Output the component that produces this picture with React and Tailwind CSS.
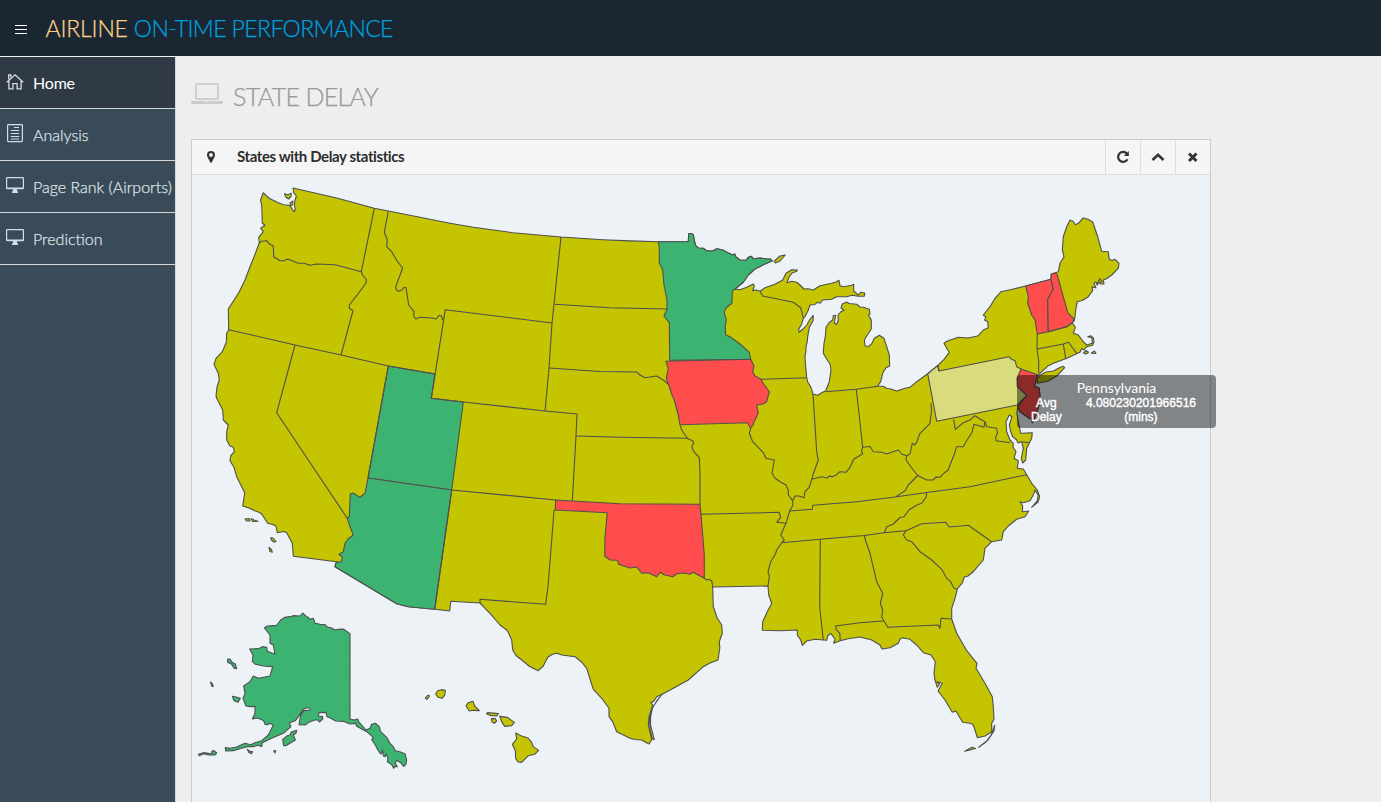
import React from "react";

const YELLOW = "#c4c400";
const GREEN = "#3cb371";
const RED = "#ff4d4d";

const MAINLAND = `M263.3,192.7 266,195.5 270,198.7 277.3,202.3 283.3,204.7 289,205.3 291,206.7 292.5,210 294.3,211.7 295.3,209.3 294.3,205 295,200.7 296.3,196 293.7,192.7 293,188
336.7,198 374.3,208.3 388.3,211 420,217.3 450,223.2 473.3,227.3 513,232.7 561,237 603,239.7 630,240.9 658.3,241.7 688.3,241.7 688.7,233.5 691,233.5 693.3,234.7 694.4,241 695.7,245.7 698.3,248 703.3,248.3 706,250.3 709,251 712.7,251 716.7,248.7 722.7,250 728.3,253 732.7,255 734.7,254 736,257 740,260 746,260.3 748.3,257.3 751.3,256.3 753.3,258.7 760,258 766.7,259 770,259 772.3,260.7
763.3,264.7 755,269 748.3,275 743.3,282.3 735,289 740,289.7 746.7,287.3 753.3,284 754.3,286.3 752.7,290.7 756,290 760,291.3 765,287.7 775,284.3 782.7,280 786,273.3 791.7,269.7 797.3,270 796.7,271.3 791.7,273.3 789,277.3 787,282.7 791.7,281.3 796.7,282.3 800,285 804,289 808,288.7 813.3,290 820,285.7 831.7,283.3 836,282 839,280.3 840,285.7 844.3,286.7 851.7,285.3 853.7,284.3 853.7,291 858.3,295 860.7,292.3 864.7,293 864.3,296.3 858.3,296.3 852,295.3 846.7,296.7 836.7,296.7 831.7,299.3 822.7,300 820,303.3 817,302.3 815,304.5 810,305 808.3,310 805,316.7 803.3,318.3 801.7,324 798.7,329.3 799,332.3 802.7,329.3 806.7,325 810,319.3 813.3,315.3 813,320.7 809.3,327.3 807.7,336.7 807.3,341.7 806,346.7 806,351 805,356.7 805.7,366.7 806.7,377.7 807.7,382 810.7,386.7 813,394 817.7,395.3 821.7,392.7 825.7,390.7 829.3,381.7 831,370 830,364 827.3,360 823.3,353.3 824,343.3 825.3,336.7 826,327.3 829,322.7 832.7,320 833.3,315.7 835.7,315.3 834.3,323.3 836.7,324.3 838.3,320 838,315 841,311.7 844,310.3 841,308 842.3,304 846.7,302 849,303.5 856.7,304.3 860,307 863.3,307.3 869.3,309.3 870,314 868.5,315 871.3,320 871.3,329 867.3,335 864.3,340 865,345.7 868.3,346.7 872,343.3 874.3,338.3 879.3,335.3 884,338.3 886.7,346.7 889.3,355 889.7,366 886,367.7 882.7,373.3 880.7,381.7 877.3,386.3 883.3,386.3 887,388.5 890,388.7 896.7,391 905,388.3 910,387.3 916.7,381.7 927.7,373.7
936.7,366.7 944,359.3 949.3,352.3 946.7,348.3 944,343.3 946.7,341.3 958.3,337.3 968.3,338 978.3,335.7 983.3,330 988.3,327.7 987.7,321.7 984.5,320 986,317.3 983.3,315 990,306.7 995,298.3 1001,291.7 1013.3,289 1025.7,286 1051,279.3 1051.3,274 1055.7,272.7 1058.3,271.7 1060,263.3 1064,256.7 1062.3,250 1063.3,236.7 1066.7,226.7 1070,220 1073,221.3 1075.3,224.7 1078.3,223.3 1083.3,218 1088,219.3 1092.7,222 1097.7,236.7 1101.7,251.3 1108.3,251.7 1109.3,259.3 1112,260.5 1115,259.3 1119,263.3 1118.3,268.3 1111.7,275 1106,279 1103.3,280 1104,284 1100,284 1099.3,280 1097.3,285.3 1096,282 1094,283.3 1096,288 1092,286.7 1092.7,290.7 1088.3,296.7 1083.3,300 1077.3,301.7 1076,308.3 1075,316.7 1074.3,320.7 1072.3,322.7 1075.3,327.3 1073.3,333.3 1078.3,335 1083.3,341.7 1086.7,345 1092.3,343.3 1092,337.7 1087.7,336.7 1090.7,335.7 1093.3,338 1094,341.7 1092.7,345.3 1086.7,346.7 1084,350 1081.7,348.5 1080,352.3 1076,354 1065.7,358.7 1053.3,363.3 1048.3,365.7 1040,373.3 1037.3,376.7
1034.3,386 1039.3,388.3 1040,396.7 1038.7,406 1036.7,413.3 1032.3,422.7 1031,418.5 1029.3,418.3 1020,411.7 1018,406.7 1016.7,413.3 1020.7,433.3 1032.3,432.7 1031.7,438.3 1026.7,448.3 1025.7,460 1022.7,463 1021.3,458.3 1023.3,448.3 1021.7,441.7 1018,443 1016.7,440 1012.7,436.7 1010.7,431.7 1009.3,425 1012,416.7 1009.3,415 1006,421.7 1006.7,431.7 1010,440 1013.3,443.3 1013,447 1016,451.7 1014,458.3 1018.3,460.7 1017.3,468.3 1023.3,469 1026.7,474.7 1031.7,483.3 1037.3,490 1039.7,496.7 1038,502 1031.7,507.3 1037.5,500.5 1038,495 1035,490 1033.3,495 1030,500.7 1023.3,502.7 1020,501.7 1022.7,506 1022.3,511.7 1028.7,511 1025,516.7 1016.7,519.3 1008.3,526 1003.3,531.7 1001.7,540 991.7,541.7 985,548.3 983.3,560 973.3,571.7 968,576 964,577.3 962.7,582.3 957.3,589 955,598.3 951.7,608.3 951.7,619
956.7,633.3 966.7,650.7 977,663.3 976,668.3 985,683.3 992.3,696.7 993.3,706.7 994,719.3 991.7,723.3 991.7,731.7 985,736 977.3,737.7 975,730 973,724.5 970,723.3 962.7,722.3 959.3,716.7 956,711 952.3,712.3 945,700 938,691 942.3,683.3 936.7,681.7 939.5,684 937.3,687.3 935,680 934,673.3 935.3,661.7 931,655 923.3,652.7 916.7,645 910,639.3 903,637.8 900,639 898.3,643.3 890,647.7 882,649 880,645 871.7,640 860,637 848.3,638.7 840,640.7 833.7,643.3 835,639.5 833.3,636.7 830.7,633.3 827.7,636 826.7,640.3 815,639.3 806.7,641 802.3,645.3 800.7,640 797.3,635 797.3,630 780,630.7 762.3,630.3 762.7,621.7 767.3,611.7 771.7,603.3 768.7,595 768,586 712.7,587
713.3,606.7 717.3,618.3 721.7,625 722.3,633.3 719.3,641.7 719.8,648 718,660 710,663 703.3,666.7 688.3,680 673.3,688.3 661.7,694.5 656.7,696.7 654,701 650.7,702.7 652.7,705 649,716.7 648.3,725 651.7,740 649,744 646,742.5 641.7,740 635,739.5 630,738.3 616.7,731.7 612.7,721.7 609,716.7 609,708.3 601.7,698.3 593.3,689.3 590,679 586.7,668.3 582,662.5 575,656.7 562,655 556.7,653.3 552,654.5 547.7,657.3 543.3,666 538.3,670.7 530,666.7 521.7,660 516,655.5 512.7,650 511.7,640 508.5,633 506.7,630 500,625 490,613.3 485,608.3 480,603 450.7,601.3 449.7,611 434.7,609.3 408.3,606.7 396.7,603.7 335,566.7 335.7,563.3 338.3,562
293.3,556.3 292.3,543.3 286.7,532.7 284,531.5 277.3,532.7 276,526 272,524.3 267.7,523.3 262,514.5 260,512.7 254,510.5 249,508 242.7,506 244.7,492.7 236.7,476.7 234,467.3 230,460.7 230.7,455.7 234.3,451.7 233.3,447.3 230,446 226.7,440 226.7,431.7 228.3,425 223.3,420 222.7,410 216.7,398.3 216,396 217,387 219.3,380 218.3,373.3 214,364.3 216,358.3 222.3,351.7 226.3,342.3 226.7,333.3 228.7,329.7 228.3,309 239.3,291.7 245,280 250,266.7 254,257 259.3,242.7 258.7,237.3 263.3,231.7 260.7,228.3 265,225.3 262.3,223.3 261.7,205 260.5,200Z`;

const TINTED = [
  ["Utah", GREEN, "388.3,366 435,374 431.3,398.3 463.3,402 451.7,490 368,478"],
  ["Arizona", GREEN, "368,478 451.7,490 434.7,609.3 408.3,606.7 396.7,603.7 335,566.7 335.7,563.3 338.3,562 341.5,561.7 342.3,557 339,554.3 343.3,551.7 345,543.3 348,539 353.3,535 350,526.7 347.3,518.3 349.3,516.7 350.3,494 353.3,493 356,495 360,497.3 365,493.3"],
  ["Minnesota", GREEN, "658.3,241.7 688.3,241.7 688.7,233.5 691,233.5 693.3,234.7 694.4,241 695.7,245.7 698.3,248 703.3,248.3 706,250.3 709,251 712.7,251 716.7,248.7 722.7,250 728.3,253 732.7,255 734.7,254 736,257 740,260 746,260.3 748.3,257.3 751.3,256.3 753.3,258.7 760,258 766.7,259 770,259 772.3,260.7 763.3,264.7 755,269 748.3,275 743.3,282.3 735,289 732.3,291 732,303.3 727,307 724,311.7 726.3,320 725.2,327 725.7,335 730,336.7 740,344 749.3,352.3 750.7,359.3 669.7,360.3 669.3,322.7 664,316 667,309.3 667,300 664,285 662.7,270 659.3,262.7 659.3,247"],
  ["Iowa", RED, "666,361.3 750.7,359.3 754,366 752.7,371.7 755,376 761,379.3 763,383 769.3,391.7 766.7,401.7 763,404 756.7,405 758.3,413.3 754,421.7 753,425 750.7,428 747.3,422.7 680,424.7 678.3,415 674.3,400 672,395 668.7,384.7 666.3,378.3 668.3,368.3"],
  ["Oklahoma", RED, "555.7,500 572.3,501 620,503.7 700,504.3 701,514.3 702.7,535 704.3,555 704.3,578.3 693.3,572.3 690,574.3 684,573 676.7,573.7 672.7,576.7 664,574.8 660,572.3 656.7,576.7 648.3,572.7 642,573.3 636.7,567 630,568 618.7,564.3 617.7,560.3 610,560 604.7,556 605,536.7 607.3,512.7 555.3,510"],
  ["Vermont", RED, "1025.7,286 1051,279.3 1053.3,289.3 1047.7,299.3 1048.3,331.7 1037.3,334 1035,320 1031.7,315 1027.7,303.3 1028.3,296.7"],
  ["New Hampshire", RED, "1051,279.3 1051.3,274 1055.7,272.7 1057.3,275 1067.7,312.7 1074.3,319.3 1072.3,322.7 1066.7,326.7 1048.3,331.7 1047.7,299.3 1053.3,289.3"],
  ["New Jersey", RED, "1021,369 1037.5,374.7 1037,378.5 1034.3,386 1039.3,388.3 1040,396.7 1038.7,406 1036.7,413.3 1032.3,422.7 1031,418.5 1029.3,418.3 1020,411.7 1018,406.7 1026.7,395.3 1017.3,386.7 1017,378.3"],
  ["Pennsylvania", "#dadb7c", "927.7,373.7 937.7,365.5 939,371 1009,356.7 1011,359 1015,360.7 1016.7,366.7 1021,369 1017,378.3 1017.3,386.7 1026.7,395.3 1017.3,405 936.7,421.3"],
];

const BORDERS = [
  "259.3,242.7 261.7,241.3 266.7,240.7 269,243.7 273.3,246 273.7,256.7 280,260.7 284,260.7 287.7,259 298.3,263.3 304,263.3 310,265.3 316.7,264 335,264.7 361.3,271.7 374.3,208.3",
  "361.3,271.7 362.5,275 366.3,279.3 366,283 356.7,295.7 349.3,305 349.3,308.3 353,310.7 341,355",
  "228.7,329.7 295,345 341,355 388.3,366 435,374",
  "388.3,211 384.3,232.3 387.3,240 386.7,246.7 391.7,251.7 397,261 402.7,268 395.7,286.7 396.5,290 398.7,291.3 402,290 404,287.3 406,287.7 408.7,305 414,311.7 413.7,316 415.7,319 420,317.3 432,318 436,319 439.3,315.3 441.5,316 442.7,320",
  "552,323 445.3,309.7 431.3,398.3 463.3,402 545,411 577,414 576,436 572.3,501",
  "561,237 552,323 549,368 545,411",
  "554.7,304.3 610,307.7 667.3,309",
  "549,368 600,371.5 636.7,372 640,375 645,377.7 656.7,376 663.3,380 668.7,384.7",
  "576,436 620,437.3 688,438.3",
  "680,424.7 681.7,430 687.3,438.3 693.3,441.3 693.3,444 691.7,446.7 694,452 699.3,457.3 700,475 700,504.3",
  "451.7,490 555.7,500",
  "388.3,366 368,478", "295,345 276.7,412.7 347.3,518.3",
  "451.7,490 434.7,609.3",
  "555.3,510 554,510.7 548.3,583.3 545.7,604.3 480,599.3 480,603",
  "704.3,578.3 706.7,580 709,579.3 711.7,580.7 712.7,587",
  "701,514.3 779,512.3 780.7,517.3 776.7,522.3 786,523.3",
  "760,291.3 762.7,296 793.3,302.3 800.7,307.7 803.3,318.3",
  "761,379.3 806.7,377.7",
  "750.7,428 749.3,433.3 752.7,441.7 763.3,452.7 766,458.3 774.3,460 772,473.3 775,478 780,481.7 786,485 788.3,490 788.3,495 792.7,500.7 795,496 799,496 804,497.7 805,491.7 809.3,487.3 811.7,479.3",
  "813,394 816.7,451.7 818.3,460 815,469 811.7,479.3 821.7,476.7 827.3,478 830,475.8 832,477 835.7,475.3 840,471.7 846,472.3 850,467.3 853.7,459.3 862.7,453.7 861.5,451 862.7,447.3 856.3,389.3",
  "825.7,391.8 856.3,389.3 877.3,386.3",
  "862.7,447.3 870,446.5 873.3,451.7 881.7,452.3 886.7,454 898.3,450 901.7,454 906.7,455.7 910,454 912.3,443.3 915,445 917.3,440.7 920,433.3 930,423.3 931.5,410 931,403.3",
  "906.7,455.7 906,460 913.3,470 917.7,475.5 908.3,485 905,490.7 896,496.7",
  "789.7,511 812.3,509.3 812.7,505.3 856.7,501.7 893.3,497.3 926.7,492.5 970,486.7 1026.7,474.7",
  "792.7,500.7 793,505 789.7,511 786,523.3 783,530 780.7,535 784.3,540 781.7,542.7 776.7,550 775.5,554 770.7,561.7 768,571.7 769.3,576 768,586",
  "781.7,542.7 820,539.3 864.3,535.5 884.3,532.7 906,530.7",
  "926.7,492.5 926,497.3 921.7,503.3 917,505 913.3,507.3 909,510 904,516.7 900,517.5 893.3,524 886.7,526.7 884.3,532.7",
  "906,530.7 921.7,523.7 945.7,522.3 949.3,527 968.3,525.3 991.7,541.7",
  "906,530.7 903.3,535 906.7,540 911.7,541.7 920,551.7 931.7,560 941.7,569.3 946.7,578.3 950.7,581.7 954,588.3 957.3,589",
  "864.3,535.5 866,542 870,553.3 876.7,581.7 882.7,593.3 880.3,603.3 882.7,610 881.7,617 887.7,627.3 938,625 940,628.3 941,618.3 951.7,619",
  "883.3,621 860,622.8 835.7,626 836,629.3 839.7,633.3 840.3,640.7",
  "820.3,539.3 819.7,607.3 823.3,640.3",
  "937.7,365.5 939,371",
  "1037.3,334 1037,349 1038.7,361 1038.7,373.3",
  "1048.3,331.7 1066.7,326.7 1072.3,322.7",
  "1037,349 1063.3,344 1068.7,342.3 1072,347 1076.7,353.3", "1063.3,344 1065.7,358.7",
  "953.7,419.3 955.3,429.3 963.3,422.7 970,420 975,415.7 980,419 985,421.7 986.7,426.7 996.7,428.3 997.5,433 995.7,437 996,440.7 1010,442.7",
  "985,421.7 984,427.3 974,424.3 971.7,433.3 967,440 963.3,446.7 956.7,446.7 954,455 950,465 948.3,470 944,473 940,477.3 936,477 933,480 926.7,480 917.7,475.5",
  "1021.7,441.7 1029.3,442.7",
];

const ISLANDS = [
  "1040.7,375 1046,372 1053.3,371 1060,367.5 1063.3,366.3 1064.7,367.7 1056.7,376 1048.3,381 1037.5,383.3 1037,379",
  "284.5,193.7 288,194.7 291.3,193.3 291,196.5 288.5,199 286,197.2",
  "290,203 293,201 292.7,204.7 290.5,205.5",
  "774,261.3 780,256 785.3,255 780,261 775.5,263",
  "245,519 249,518.5 250,521 246.5,521", "251,518.5 254,520 258,521.3 252.5,521.5",
  "271,537.5 273,538 276,541.7 273.7,542 271,539.5", "269,547.3 271.5,549.5 272.3,552.3 270,551.5",
  "1083.5,353 1086,350.5 1088.5,352.3 1086,354", "1091.3,353.3 1094.5,351 1096,353.5",
  "1097.5,283 1100,278.7 1102,282",
  "994.7,725.3 994,731 988,740 978.7,747.3 986,742 991,735",
  "964.7,751.3 972,747.3 975.5,748.5 969,750.3",
  "662,694.3 657,700.5 652.5,708 650.6,717 650.5,725 654.3,739.7 652.3,738.7 650,730 649.5,718 652.7,707",
];

const ALASKA = [
  "338,39 346,46 350,50 355,52 358,58 370,55 376,70 390,73 405,74 412,81 425,84 435,90 445,88 460,87 480,101 480,357 492,360 503,357 507,366 528,390 540,385 545,373 557,370 568,380 572,395 590,412 600,430 610,440 616,452 632,456 645,461 650,480 648,493 641,499 632,488 620,481 616,490 622,500 614,500 611,505 606,495 600,490 592,485 594,475 588,461 585,470 580,468 578,450 574,462 570,460 562,447 553,430 545,418 550,412 530,395 499,378 498,370 480,372 460,364 437,363 420,353 411,350 408,337 387,338 385,348 398,350 398,357 388,366 383,360 375,360 360,365 345,375 327,374 332,345 342,332 362,330 358,324 348,324 340,328 325,350 316,362 298,368 303,380 280,400 245,415 217,428 215,440 205,436 190,440 172,440 155,445 130,452 107,453 106,443 120,445 140,441 165,430 182,434 195,428 215,422 235,405 250,375 240,370 234,374 225,373 221,362 212,358 200,354 187,357 195,340 195,319 182,320 168,318 159,295 165,280 161,258 180,245 190,228 205,235 225,231 240,228 248,200 220,198 196,193 187,184 189,165 179,147 205,146 218,140 230,142 232,154 255,163 250,135 240,130 240,105 223,84 232,78 260,76 272,60 284,52 300,50 310,47 330,48",
  "113,178 120,177 126,187 136,192 140,206 133,205 125,193 113,187",
  "61,246 66,250 70,259 66,259", "127,289 138,291 151,295 144,307 132,302",
  "25,463 40,458 55,460 65,462 66,453 72,452 80,459 74,465 55,465 42,461 28,467",
  "278,418 292,407 300,405 304,396 320,391 318,400 310,404 316,420 290,436 281,437",
  "172,448 178,453 188,455 184,461 176,457", "251,453 257,452 255,459",
];

const HAWAII = [
  "706,294 713,286 719,288 711,298", "737,282 743,272 755,269 766,271 764,286 756,295 743,291",
  "828,318 834,308 849,304 855,319 868,332 850,331 838,333", "889,341 893,338 925,341 920,348 900,346",
  "904,356 916,356 920,363 913,370 906,366", "929,349 952,352 973,367 965,377 944,379 935,365",
  "977,399 995,408 1014,414 1025,427 1030,440 1046,451 1034,463 1015,467 995,487 984,486 977,475 976,452 967,433 980,417",
];

const poly = (points, fill, key) => (
  <polygon key={key} points={points} fill={fill} vectorEffect="non-scaling-stroke" />
);

function DelayMap() {
  return (
    <svg viewBox="192 175 1018 627" className="block h-[627px] w-[1018px]" stroke="#4f4f4f" strokeWidth="1.1" strokeLinejoin="round">
      <path d={MAINLAND} fill={YELLOW} />
      {ISLANDS.map((p, i) => poly(p, YELLOW, i))}
      {TINTED.map(([name, fill, p]) => poly(p, fill, name))}
      <g fill="none">
        {BORDERS.map((p, i) => <polyline key={i} points={p} />)}
      </g>
      <g transform="translate(190 600) scale(.33333)">
        {ALASKA.map((p, i) => poly(p, GREEN, i))}
        {HAWAII.map((p, i) => poly(p, YELLOW, i))}
      </g>
    </svg>
  );
}

const HomeIcon = () => (
  <svg viewBox="0 -1 18 18" className="h-[18px] w-[18px] overflow-visible" fill="none" stroke="currentColor" strokeWidth="1.3">
    <path d="M.8 9.3 9 1.8l8.2 7.5M2.9 8v7.8h4v-5.2h4.2v5.2h4V8" />
    <path d="M2.7 6.5V1.8h2.2v2.7" />
  </svg>
);
const DocIcon = () => (
  <svg viewBox="0 0 18 20" className="h-5 w-[18px]" fill="none" stroke="currentColor" strokeWidth="1.2">
    <rect x="1.6" y="1.6" width="14.8" height="17" rx=".8" />
    <path d="M8 4.5h5M4.7 7.5h8.6M5 10.5h8M4.7 13.5h8.6M5 16h8" />
  </svg>
);
const ScreenIcon = () => (
  <svg viewBox="0 -0.5 18 17" className="h-[17px] w-[18px]" fill="none" stroke="currentColor" strokeWidth="1.2">
    <rect x=".6" y="1.1" width="16.8" height="11" rx=".6" />
    <path d="M1 11.7h16M6 15.6h6" strokeWidth="1.6" />
    <path d="M7 12.5h4v3H7z" fill="currentColor" stroke="none" />
  </svg>
);

const NAV = [
  ["Home", HomeIcon], ["Analysis", DocIcon], ["Page Rank (Airports)", ScreenIcon], ["Prediction", ScreenIcon],
];

const Tool = ({ children }) => (
  <span className="flex h-full w-[35px] items-center justify-center border-l border-[#ddd] pr-px pb-px">
    <svg viewBox="0 0 14 14" className="h-3.5 w-3.5" fill="none" stroke="#333" strokeWidth="2.2">{children}</svg>
  </span>
);

export default function App() {
  return (
    <div className="flex h-[802px] w-[1381px] flex-col overflow-hidden bg-[#eeeeee] font-['Lato',sans-serif]">
      <header className="flex h-14 shrink-0 items-center bg-[#1a2732] pl-[15px]">
        <svg viewBox="0 0 12 11" className="mt-[3px] h-[11px] w-3" stroke="#fff" strokeWidth="1.2">
          <path d="M0 1.500h12M0 5.500h12M0 9.500h12" />
        </svg>
        <h1 className="ml-[18.5px] flex gap-[6px] whitespace-nowrap pb-px text-[23px] font-light leading-8 [-webkit-text-stroke:0.25px_currentColor]">
          <span className="tracking-[-0.15px] text-[#fed189]">AIRLINE</span>
          <span className="tracking-[-0.59px] text-[#00a0df]">ON-TIME PERFORMANCE</span>
        </h1>
      </header>

      <div className="flex min-h-0 grow">
        <nav className="w-44 shrink-0 border-r border-[#d7d7d7] bg-[#394a59]">
          <div className="h-px bg-[#f4f4f4]" />
          {NAV.map(([label, Icon], i) => (
            <a key={label} className={`flex h-[52px] items-center border-b border-[#d7d7d7] pl-1.5 text-base whitespace-nowrap ${i === 0 ? "bg-[#2f3a46] text-white tracking-[-0.2px]" : "font-light text-[#dfe4e8] [-webkit-text-stroke:0.25px_currentColor]"}`}>
              <span className="mb-1 flex w-[18px] justify-center text-[#d5dde3]"><Icon /></span>
              <span className="ml-[9px]">{label}</span>
            </a>
          ))}
        </nav>

        <main className="flex flex-col pl-[15px]">
          <div className="flex h-[83px] items-center">
            <svg viewBox="0 0 32 24" className="mb-[7px] h-6 w-8" fill="#c8cccf">
              <path fillRule="evenodd" d="M7 1h18a3 3 0 0 1 3 3v11a3 3 0 0 1-3 3H7a3 3 0 0 1-3-3V4a3 3 0 0 1 3-3Zm0 1.8A1.2 1.2 0 0 0 5.8 4v11A1.2 1.2 0 0 0 7 16.200h18a1.200 1.200 0 0 0 1.200-1.200V4A1.200 1.200 0 0 0 25 2.800ZM0 19h32v1.500c0 1-1.300 1.500-3 1.500H3c-1.700 0-3-.5-3-1.500Z" />
              <path d="M14 20h4" stroke="#eee" strokeWidth=".8" />
            </svg>
            <h2 className="ml-[10px] pb-0.5 text-[25px] font-light tracking-[-0.68px] text-[#999] [-webkit-text-stroke:0.25px_currentColor]">STATE DELAY</h2>
          </div>

          <section className="flex w-[1020px] grow flex-col border border-b-0 border-[#cccccc] bg-[#edf2f7]">
            <div className="flex h-[35px] shrink-0 items-center border-b border-[#ddd] bg-[#f5f5f5]">
              <svg viewBox="0 0 10 14" className="ml-[14px] h-3.5 w-2.5" fill="#333">
                <path fillRule="evenodd" d="M5 1a4 4 0 0 1 4 4c0 1.300-.5 2-1 3l-2.300 4.600a.8.8 0 0 1-1.400 0L2 8C1.500 7 1 6.300 1 5a4 4 0 0 1 4-4Zm0 2.100a1.900 1.900 0 1 0 0 3.800 1.900 1.900 0 0 0 0-3.800Z" />
              </svg>
              <strong className="ml-[21px] grow pb-px text-[15px] font-bold tracking-[-0.4px] text-[#2d2d2d]">States with Delay statistics</strong>
              <Tool><path d="M11.500 9.300A5 5 0 1 1 11 3.700" /><path d="M12.800 1v5H7.800z" fill="#333" stroke="none" /></Tool>
              <Tool><path d="m1.500 10 5.500-5.300L12.500 10" strokeWidth="2.600" /></Tool>
              <Tool><path d="m3 3.500 7.500 7.500M10.500 3.500 3 11" strokeWidth="2.900" /></Tool>
            </div>
            <div className="relative h-[627px] w-[1018px]">
              <DelayMap />
              <div className="absolute left-[825px] top-[200px] h-[53px] w-[199px] rounded bg-black/45 text-white">
                <div className="pt-1 text-center text-sm leading-[18px]">Pennsylvania</div>
                <div className="-mt-px flex justify-between pr-5 pl-3.5 text-center font-['Liberation_Sans',sans-serif] text-xs leading-[14px] [-webkit-text-stroke:0.4px_white]">
                  <span>Avg<br />Delay</span>
                  <span>4.080230201966516<br />(mins)</span>
                </div>
              </div>
            </div>
          </section>
        </main>
      </div>
    </div>
  );
}
